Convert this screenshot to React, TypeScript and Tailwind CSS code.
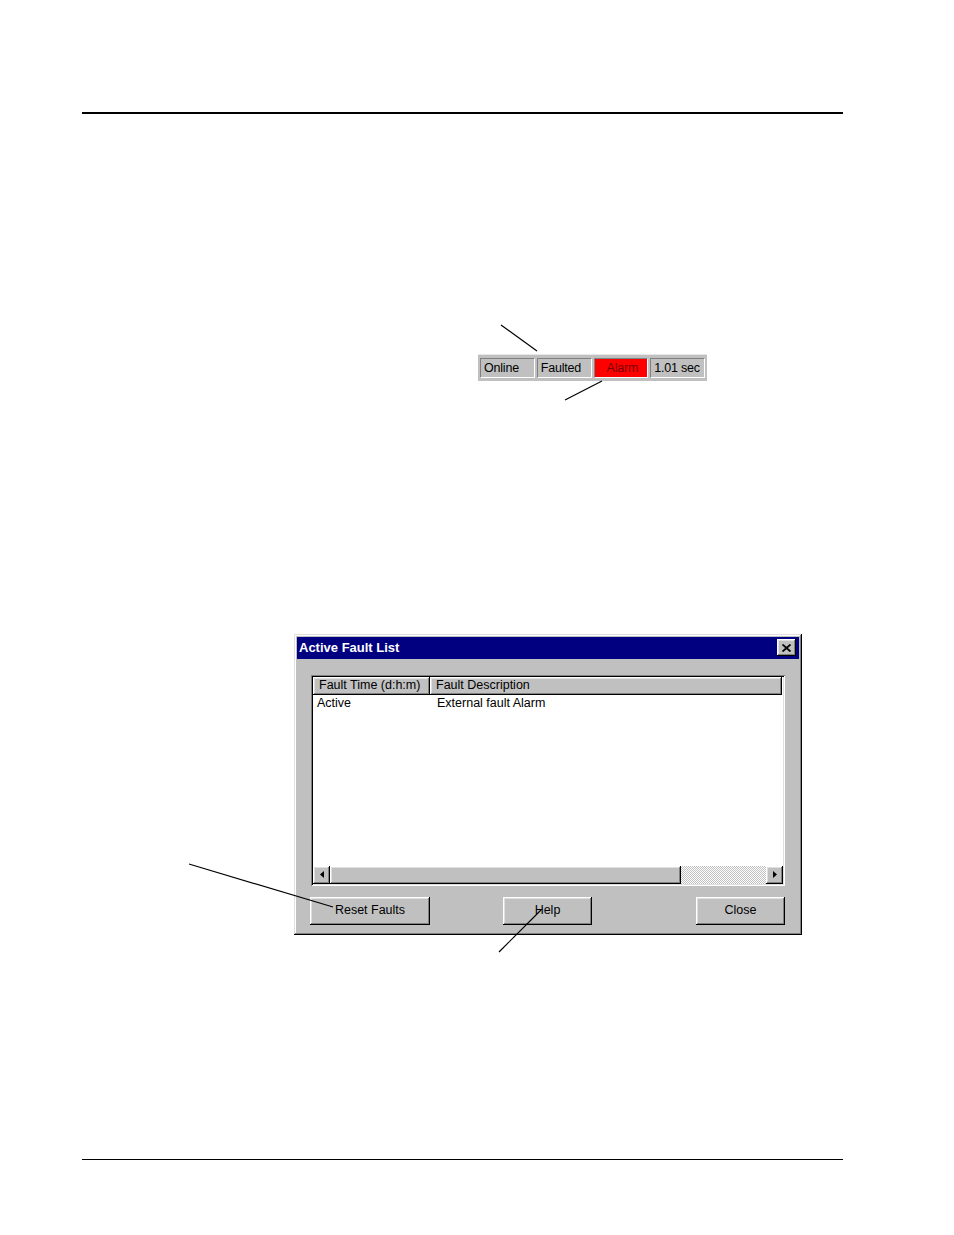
const raised =
  "shadow-[inset_-1px_-1px_0_#000,inset_1px_1px_0_#fff,inset_-2px_-2px_0_#808080,inset_2px_2px_0_#dfdfdf]";
const sunken =
  "shadow-[inset_1px_1px_0_#808080,inset_-1px_-1px_0_#fff,inset_2px_2px_0_#000,inset_-2px_-2px_0_#dfdfdf]";

function Panel({ label, alarm }: { label: string; alarm?: boolean }) {
  return (
    <div
      className={`flex h-[20px] w-[55px] items-center whitespace-nowrap border border-t-[#808080] border-l-[#808080] border-r-white border-b-white pl-[3px] pt-[2px] text-[12.5px] leading-none tracking-[-0.2px] ${
        alarm ? "justify-center bg-[#ff0000] pl-0 text-[#7a0000]" : "bg-[#c0c0c0] text-black"
      }`}
    >
      {label}
    </div>
  );
}

function Btn({ label, width, className = "" }: { label: string; width: string; className?: string }) {
  return (
    <button
      type="button"
      className={`flex h-[28px] ${width} ${className} items-center justify-center bg-[#c0c0c0] text-[12.5px] text-black ${raised}`}
    >
      {label}
    </button>
  );
}

function Arrow({ dir }: { dir: "left" | "right" }) {
  return (
    <div className={`flex h-[18px] w-[17px] shrink-0 items-center justify-center bg-[#c0c0c0] ${raised}`}>
      <svg width="4" height="7" viewBox="0 0 4 7">
        {dir === "left" ? <path d="M4 0 0 3.5 4 7z" fill="#000" /> : <path d="M0 0 4 3.5 0 7z" fill="#000" />}
      </svg>
    </div>
  );
}

export default function App() {
  return (
    <div
      className="relative h-[1235px] w-[954px] overflow-hidden bg-white"
      style={{ fontFamily: '"Liberation Sans", Arial, sans-serif' }}
    >
      <div className="ml-[82px] w-[761px] pt-[112px]">
        <div className="h-[1.5px] bg-black" />
      </div>

      {/* status bar */}
      <div className="ml-[478px] mt-[240px] flex h-[28px] w-[229px] items-center gap-[2px] border-t border-b border-t-[#e8e8e8] border-b-white bg-[#c0c0c0] px-[2px]">
        <Panel label="Online" />
        <Panel label="Faulted" />
        <Panel label="Alarm" alarm />
        <Panel label="1.01 sec" />
      </div>

      {/* dialog */}
      <div className="ml-[294px] mt-[252px] flex h-[301px] w-[508px] flex-col bg-[#c0c0c0] p-[3px] shadow-[inset_-1px_-1px_0_#000,inset_1px_1px_0_#dfdfdf,inset_-2px_-2px_0_#808080,inset_2px_2px_0_#fff]">
        <div className="flex h-[22px] items-center justify-between bg-[#000080] pl-[2px] pr-[3px]">
          <span className="text-[13px] font-bold text-white">Active Fault List</span>
          <div className={`flex h-[17px] w-[19px] items-center justify-center bg-[#c0c0c0] ${raised}`}>
            <svg width="9" height="8" viewBox="0 0 9 8">
              <path d="M0.5 0.5 8.5 7.5M8.5 0.5 0.5 7.5" stroke="#000" strokeWidth="1.8" />
            </svg>
          </div>
        </div>

        <div className={`mx-[14px] mt-[16px] flex h-[211px] flex-col bg-white p-[2px] ${sunken}`}>
          <div className="flex h-[18px] shrink-0 text-[12.5px]">
            <div className={`flex w-[117px] items-center bg-[#c0c0c0] pl-[6px] ${raised}`}>Fault Time (d:h:m)</div>
            <div className={`flex w-[352px] items-center bg-[#c0c0c0] pl-[6px] ${raised}`}>Fault Description</div>
          </div>
          <div className="flex h-[17px] items-center text-[12.5px]">
            <span className="w-[124px] pl-[4px]">Active</span>
            <span>External fault Alarm</span>
          </div>
          <div className="flex-1" />
          <div className="flex h-[18px] shrink-0">
            <Arrow dir="left" />
            <div className={`h-[18px] w-[351px] bg-[#c0c0c0] ${raised}`} />
            <div className="h-[18px] flex-1 bg-[repeating-conic-gradient(#c0c0c0_0_25%,#fff_0_50%)] bg-[length:2px_2px]" />
            <Arrow dir="right" />
          </div>
        </div>

        <div className="mt-[11px] flex items-center pl-[13px]">
          <Btn label="Reset Faults" width="w-[120px]" />
          <Btn label="Help" width="w-[89px]" className="ml-[73px]" />
          <Btn label="Close" width="w-[89px]" className="ml-[104px]" />
        </div>
      </div>

      <div className="ml-[82px] mt-[224px] w-[761px]">
        <div className="h-[1.5px] bg-black" />
      </div>

      {/* pointer lines */}
      <svg className="pointer-events-none absolute inset-0" width="954" height="1235">
        <g stroke="#000" strokeWidth="1.2">
          <line x1="501" y1="325" x2="537" y2="351" />
          <line x1="565" y1="400" x2="602" y2="381" />
          <line x1="189" y1="864" x2="333" y2="907" />
          <line x1="499" y1="952" x2="541" y2="910" />
        </g>
      </svg>
    </div>
  );
}
